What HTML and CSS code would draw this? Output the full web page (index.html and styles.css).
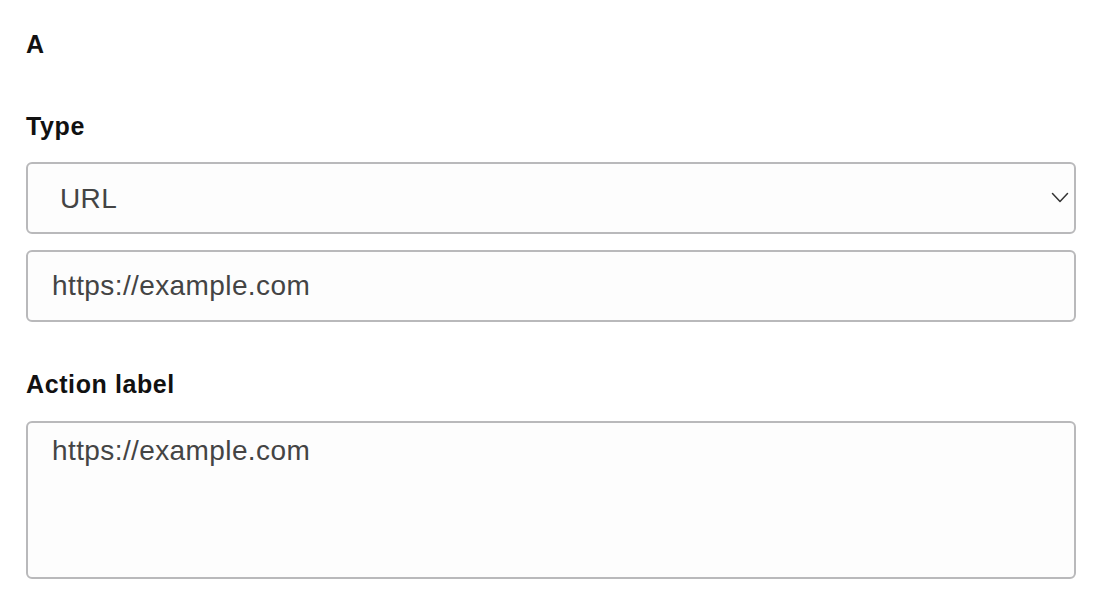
FILE: index.html
```html
<!DOCTYPE html>
<html lang="en">
<head>
<meta charset="utf-8">
<title>Action</title>
<link rel="stylesheet" href="styles.css">
</head>
<body>
<form class="form">
  <div class="title">A</div>
  <label class="label label-type" for="type">Type</label>
  <div class="select-wrap">
    <select id="type" class="field select">
      <option>URL</option>
    </select>
    <svg class="chevron" width="18" height="12" viewBox="0 0 18 12" aria-hidden="true">
      <path d="M1.5 1.5 L9 9.5 L16.5 1.5" fill="none" stroke="#333" stroke-width="1.5" stroke-linecap="round" stroke-linejoin="round"/>
    </svg>
  </div>
  <input class="field input" type="text" value="https://example.com">
  <label class="label label-action" for="action">Action label</label>
  <textarea id="action" class="field textarea">https://example.com</textarea>
</form>
</body>
</html>
```
FILE: styles.css
```css
html, body {
  margin: 0;
  padding: 0;
  background: #ffffff;
}

body {
  font-family: "Liberation Sans", Arial, Helvetica, sans-serif;
  color: #111;
}

.form {
  display: flex;
  flex-direction: column;
  padding: 29px 26px 0 26px;
}

.title {
  font-size: 25px;
  line-height: 30px;
  font-weight: 600;
  color: #111;
}

.label {
  display: block;
  font-size: 25px;
  line-height: 30px;
  font-weight: 600;
  letter-spacing: 0.6px;
  color: #111;
}

.label-type {
  margin-top: 52px;
  margin-bottom: 21px;
}

.label-action {
  margin-top: 47px;
  margin-bottom: 22px;
}

.field {
  box-sizing: border-box;
  width: 100%;
  margin: 0;
  border: 2px solid #b9b9bb;
  border-radius: 6px;
  background: #fdfdfd;
  font-family: "Liberation Sans", Arial, Helvetica, sans-serif;
  font-size: 28px;
  letter-spacing: 0.4px;
  color: #444;
  outline: none;
}

.select-wrap {
  position: relative;
}

.select {
  appearance: none;
  -webkit-appearance: none;
  height: 72px;
  padding: 0 60px 0 32px;
  display: block;
}

.chevron {
  position: absolute;
  right: 7px;
  top: 30px;
  pointer-events: none;
}

.input {
  margin-top: 16px;
  height: 72px;
  padding: 0 20px 0 24px;
}

.textarea {
  height: 158px;
  padding: 11px 20px 0 24px;
  resize: none;
  line-height: 34px;
  display: block;
}
```
